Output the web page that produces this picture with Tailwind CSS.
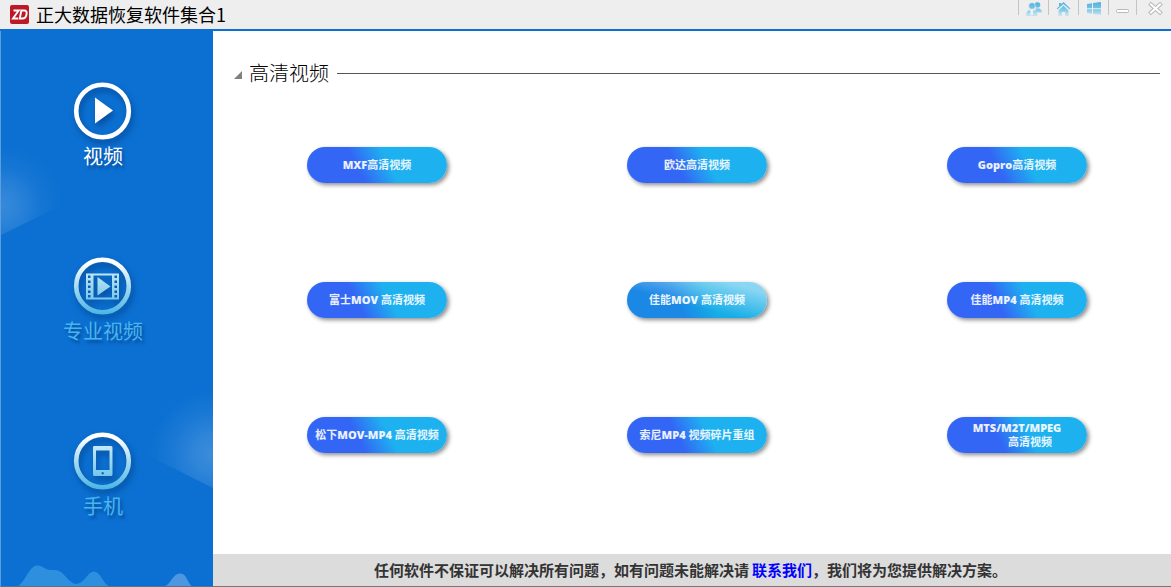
<!DOCTYPE html>
<html lang="zh-CN">
<head>
<meta charset="utf-8">
<title>正大数据恢复软件集合1</title>
<script src="https://cdn.jsdelivr.net/npm/@tailwindcss/browser@4"></script>
</head>
<body class="flex min-h-screen flex-col bg-white font-['Open_Sans','Noto_Sans_CJK_SC',sans-serif]">
<header class="flex h-[31px] shrink-0 items-center border-b-2 border-[#0b70d2] bg-[#eeeeee] pl-[10px]">
  <svg class="size-[19px]" viewBox="0 0 19 19" aria-hidden="true">
    <rect width="19" height="19" rx="2" fill="#bd1826"/>
    <path d="M3.500 5.500h5.200L3 13.500h5.200M11.300 5.500h3q3 0 2.200 4q-.8 4-4 4h-2.700z" fill="none" stroke="#fff" stroke-width="1.900"/>
  </svg>
  <h1 class="ml-[7px] pb-0.5 font-['Noto_Sans_CJK_SC',sans-serif] text-[18px] leading-6 font-normal text-black">正大数据恢复软件集合1</h1>
  <nav class="ml-auto flex self-start" aria-label="窗口">
    <svg width="0" height="0" class="absolute" aria-hidden="true"><defs>
      <linearGradient id="sky" gradientUnits="userSpaceOnUse" x1="0" y1="1" x2="0" y2="15"><stop stop-color="#45addd"/><stop offset=".6" stop-color="#7dc8e8"/><stop offset="1" stop-color="#c5e3ef"/></linearGradient>
    </defs></svg>
    <button aria-label="用户" class="h-4 w-[30px]"><svg width="30" height="16" viewBox="0 0 30 16"><path d="M.5 0v15" stroke="#c4c4c4"/><g fill="url(#sky)"><circle cx="19.500" cy="5" r="2.800"/><path d="M17.500 8.500h4q2.500 1 2.500 4h-6z"/><circle cx="14" cy="6" r="3.300" stroke="#eee" stroke-width=".6"/><path d="M8 16q0-5 3.500-6l2.500 3 2-3q3 1 3.500 6z"/><path d="M13 10h1.600l.8 4-1.600 1.500-1.600-1.500z" fill="#eaf5fa"/></g></svg></button>
    <button aria-label="主页" class="h-4 w-[30px]"><svg width="30" height="16" viewBox="0 0 30 16"><path d="M.5 0v15" stroke="#c4c4c4"/><g fill="url(#sky)"><path d="M15.500 2L22.500 8.500l-1 1-6-5.500L9.500 9.500l-1-1L11 6.200V3h2.200v1.200z"/><path d="M15.500 5.500l5 5V16h-3.300v-4h-3.400v4h-3.300v-5.500z"/></g></svg></button>
    <button aria-label="系统" class="h-4 w-[30px]"><svg width="30" height="16" viewBox="0 0 30 16"><path d="M.5 0v15" stroke="#c4c4c4"/><path d="M9 4l5-.7V8.300H9zM15 3.100l8-1V8.300h-8zM9 9.300h5v4.500L9 13zM15 9.300h8V15l-8-1z" fill="url(#sky)"/></svg></button>
    <button aria-label="最小化" class="h-4 w-7"><svg width="28" height="16" viewBox="0 0 28 16"><path d="M.5 0v15" stroke="#c4c4c4"/><rect x="8.500" y="9.500" width="12" height="3" rx="1" fill="#fff" stroke="#b9b9b9"/></svg></button>
    <button aria-label="关闭" class="h-4 w-[35px]"><svg width="35" height="16" viewBox="0 0 35 16"><path d="M.5 0v15" stroke="#c4c4c4"/><path d="M15 4.500l9 8m0-8l-9 8" stroke="#b3b3b3" stroke-width="4" stroke-linecap="square"/><path d="M15 4.500l9 8m0-8l-9 8" stroke="#fff" stroke-width="2.200" stroke-linecap="square"/></svg></button>
  </nav>
</header>
<div class="flex flex-1">
  <aside class="relative w-[213px] shrink-0 overflow-hidden border-b border-l border-b-[#5b6f86] border-l-[#5c9fe1] bg-[#0b70d2] pt-[51px]">
    <svg class="absolute top-[109px] left-0" width="76" height="98" aria-hidden="true"><defs><radialGradient id="gl" gradientUnits="userSpaceOnUse" cx="0" cy="66" r="62"><stop stop-color="#fff" stop-opacity=".18"/><stop offset=".3" stop-color="#fff" stop-opacity=".13"/><stop offset=".65" stop-color="#fff" stop-opacity=".04"/><stop offset="1" stop-color="#fff" stop-opacity="0"/></radialGradient></defs><path d="M0 0H76V58L0 95z" fill="url(#gl)"/></svg>
    <svg class="absolute right-0 bottom-[96px]" width="80" height="102" aria-hidden="true"><defs><radialGradient id="gr" gradientUnits="userSpaceOnUse" cx="80" cy="66" r="64"><stop stop-color="#fff" stop-opacity=".2"/><stop offset=".3" stop-color="#fff" stop-opacity=".15"/><stop offset=".65" stop-color="#fff" stop-opacity=".06"/><stop offset="1" stop-color="#fff" stop-opacity="0"/></radialGradient></defs><path d="M80 0H0V60L80 100z" fill="url(#gr)"/></svg>
    <svg class="absolute bottom-0 left-0" width="212" height="22" aria-hidden="true"><path d="M17 22C25 17 28 2 36 1.500C42 1 43 6 50 6C64 5 62 14 74 20C84 20 86 8 93 7.500C100 8 102 20 108 22z" fill="#2d8fdd"/><path d="M164 22C170 20 172 9 179 9.500C186 9 186 19 191 22z" fill="#4c97df"/></svg>
    <svg width="0" height="0" class="absolute" aria-hidden="true"><defs><linearGradient id="ring" gradientUnits="userSpaceOnUse" x1="0" y1="0" x2="0" y2="58"><stop offset=".1" stop-color="#fff"/><stop offset=".5" stop-color="#a9dbf1"/><stop offset="1" stop-color="#47b4e4"/></linearGradient><linearGradient id="glyph" gradientUnits="userSpaceOnUse" x1="0" y1="14" x2="0" y2="44"><stop stop-color="#c6e9f7"/><stop offset="1" stop-color="#74c6ea"/></linearGradient></defs></svg>
    <nav class="relative flex flex-col gap-[89px] font-['Noto_Sans_CJK_SC',sans-serif] text-[20px] leading-6 font-normal" aria-label="分类">
      <button class="flex flex-col items-center gap-1 pr-2 text-white [text-shadow:2px_3px_3px_rgb(0_40_100/0.5)]">
        <svg class="size-[58px] overflow-visible drop-shadow-[2px_4px_3px_rgb(0_40_100/0.5)]" viewBox="0 0 58 58" fill="none"><circle cx="28.500" cy="29" r="26.300" stroke="#fff" stroke-width="4.600"/><path d="M21 15.500L39 28.500L21 41.500z" fill="#fff"/></svg>
        <span>视频</span>
      </button>
      <button class="flex flex-col items-center gap-1 pr-2 text-[#48b5ee] [text-shadow:2px_3px_3px_rgb(0_40_100/0.5)]">
        <svg class="size-[58px] overflow-visible drop-shadow-[2px_4px_3px_rgb(0_40_100/0.5)]" viewBox="0 0 58 58" fill="none"><circle cx="28.500" cy="29" r="26.300" stroke="url(#ring)" stroke-width="4.600"/><path fill="url(#glyph)" fill-rule="evenodd" d="M12 16.500H45V42.500H12zM19.500 18.500V40.500H38V18.500zM14 18.500v2.500H16.500v-2.500zM14 23.500v2.500H16.500v-2.500zM14 28.500v2.500H16.500v-2.500zM14 33.500v2.500H16.500v-2.500zM14 38v2.500H16.500V38zM40.500 18.500v2.500H43v-2.500zM40.500 23.500v2.500H43v-2.500zM40.500 28.500v2.500H43v-2.500zM40.500 33.500v2.500H43v-2.500zM40.500 38v2.500H43V38zM23.500 20L36.500 29.500L23.500 38.500z"/></svg>
        <span>专业视频</span>
      </button>
      <button class="flex flex-col items-center gap-1 pr-2 text-[#48b5ee] [text-shadow:2px_3px_3px_rgb(0_40_100/0.5)]">
        <svg class="size-[58px] overflow-visible drop-shadow-[2px_4px_3px_rgb(0_40_100/0.5)]" viewBox="0 0 58 58" fill="none"><circle cx="28.500" cy="29" r="26.300" stroke="url(#ring)" stroke-width="4.600"/><path fill="url(#glyph)" fill-rule="evenodd" d="M20 14H37Q38.500 14 38.500 15.500V42.500Q38.500 44 37 44H20.500Q19 44 19 42.500V15.500Q19 14 20 14zM22 18.500V38H35.500V18.500zM28.700 40a1.200 1.200 0 1 0 .01 0z"/></svg>
        <span>手机</span>
      </button>
    </nav>
  </aside>
  <div class="flex min-w-0 flex-1 flex-col overflow-hidden">
    <main class="flex-1 pt-7">
      <div class="flex items-center pr-[11px] pl-[21px]">
        <svg class="mt-1 size-2" viewBox="0 0 8 8" aria-hidden="true"><path d="M8 0v8H0z" fill="#808080"/></svg>
        <h2 class="ml-[7px] font-['Noto_Sans_CJK_SC',sans-serif] text-[20px] leading-7 font-light text-black">高清视频</h2>
        <hr class="ml-2 flex-1 border-[#555]">
      </div>
      <div class="mt-[60px] -mr-[6px] ml-1 grid grid-cols-3 justify-items-center gap-y-[99px] text-[11px] leading-[14px] font-bold whitespace-nowrap text-white/90">
        <button class="h-9 w-[140px] rounded-full bg-[linear-gradient(63deg,#3366f5_37%,#1eb1f0_58%)] shadow-[2px_2px_4px_rgb(0_0_0/0.45)]"><span class="font-extrabold">MXF</span>高清视频</button>
        <button class="h-9 w-[140px] rounded-full bg-[linear-gradient(63deg,#3366f5_37%,#1eb1f0_58%)] shadow-[2px_2px_4px_rgb(0_0_0/0.45)]">欧达高清视频</button>
        <button class="h-9 w-[140px] rounded-full bg-[linear-gradient(63deg,#3366f5_37%,#1eb1f0_58%)] shadow-[2px_2px_4px_rgb(0_0_0/0.45)]"><span class="font-extrabold">Gopro</span>高清视频</button>
        <button class="h-9 w-[140px] rounded-full bg-[linear-gradient(63deg,#3366f5_37%,#1eb1f0_58%)] shadow-[2px_2px_4px_rgb(0_0_0/0.45)]">富士<span class="font-extrabold">MOV</span> 高清视频</button>
        <button class="h-9 w-[140px] rounded-full bg-[linear-gradient(195deg,rgb(255_255_255/0.5)_15%,rgb(255_255_255/0)_60%),linear-gradient(63deg,#1b88e6_37%,#14ade6_58%)] shadow-[2px_2px_4px_rgb(0_0_0/0.45)]">佳能<span class="font-extrabold">MOV</span> 高清视频</button>
        <button class="h-9 w-[140px] rounded-full bg-[linear-gradient(63deg,#3366f5_37%,#1eb1f0_58%)] shadow-[2px_2px_4px_rgb(0_0_0/0.45)]">佳能<span class="font-extrabold">MP4</span> 高清视频</button>
        <button class="h-9 w-[140px] rounded-full bg-[linear-gradient(63deg,#3366f5_37%,#1eb1f0_58%)] shadow-[2px_2px_4px_rgb(0_0_0/0.45)]">松下<span class="font-extrabold">MOV-MP4</span> 高清视频</button>
        <button class="h-9 w-[140px] rounded-full bg-[linear-gradient(63deg,#3366f5_37%,#1eb1f0_58%)] shadow-[2px_2px_4px_rgb(0_0_0/0.45)]">索尼<span class="font-extrabold">MP4</span> 视频碎片重组</button>
        <button class="h-9 w-[140px] rounded-full bg-[linear-gradient(63deg,#3366f5_37%,#1eb1f0_58%)] shadow-[2px_2px_4px_rgb(0_0_0/0.45)]"><span class="font-extrabold">MTS/M2T/MPEG</span><br><span class="pl-[26px]">高清视频</span></button>
      </div>
    </main>
    <footer class="flex h-[33px] items-center border-b border-[#777] bg-[#dcdcdc] pl-[161px] font-['Noto_Sans_CJK_SC',sans-serif] text-[15px] leading-6 font-bold whitespace-nowrap text-[#333]">
      <p>任何软件不保证可以解决所有问题，如有问题未能解决请<a href="#" class="ml-[3px] text-[#0000ff]">联系我们</a>，我们将为您提供解决方案。</p>
    </footer>
  </div>
</div>
</body>
</html>
